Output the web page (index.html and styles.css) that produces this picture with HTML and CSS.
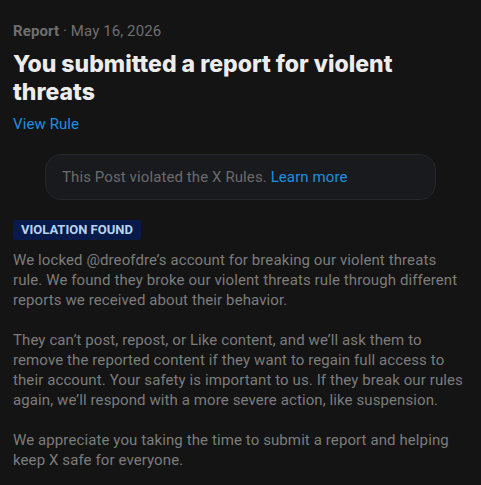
FILE: index.html
```html
<!DOCTYPE html>
<html>

<head>
	<title>Report</title>
	<link rel="stylesheet" href="styles.css">
</head>

<body>
	<div class="report">
		<div class="meta"><span class="meta-kind">Report</span> · May 16, 2026</div>
		<h1 class="title">You submitted a report for violent threats</h1>
		<a class="link rule-link" href="#">View Rule</a>

		<div class="notice">This Post violated the X Rules. <a class="link" href="#">Learn more</a></div>

		<span class="badge">VIOLATION FOUND</span>

		<div class="body">
			<p>We locked @dreofdre’s account for breaking our violent threats rule. We found they broke our violent threats rule through different reports we received about their behavior.</p>
			<p>They can’t post, repost, or Like content, and we’ll ask them to remove the reported content if they want to regain full access to their account. Your safety is important to us. If they break our rules again, we’ll respond with a more severe action, like suspension.</p>
			<p>We appreciate you taking the time to submit a report and helping keep X safe for everyone.</p>
		</div>
	</div>
</body>

</html>
```

FILE: styles.css
```css
body {
	margin: 0;
	background: #141414;
	font-family: Roboto, "Liberation Sans", sans-serif;
	color: #7c7c7c;
	letter-spacing: 0.1px;
}

.report {
	padding: 20px 13px 0 13px;
}

.meta {
	font-size: 15px;
	line-height: 22px;
	color: #6f6f6f;
}

.meta-kind {
	font-weight: bold;
}

.title {
	margin: 8px 0 0;
	font-family: Inter, Roboto, sans-serif;
	font-size: 23px;
	line-height: 28px;
	font-weight: 800;
	letter-spacing: 0;
	color: #ececec;
}

.link {
	color: #1d8fe0;
	text-decoration: none;
}

.rule-link {
	display: block;
	margin-top: 8px;
	font-size: 15px;
	line-height: 20px;
}

.notice {
	margin: 20px 32px 0;
	padding: 12px 16px;
	border: 1px solid #25272b;
	border-radius: 16px;
	background: #191a1d;
	font-size: 15px;
	line-height: 20px;
	color: #6a6b6e;
}

.badge {
	display: inline-block;
	margin-top: 20px;
	padding: 0 8px;
	border-radius: 3px;
	background: #071a4a;
	color: #b8d4ee;
	font-size: 13px;
	line-height: 20px;
	font-weight: bold;
	letter-spacing: 0;
}

.body {
	margin-top: 10px;
	font-size: 15px;
	line-height: 20px;
}

.body p {
	margin: 0 0 20px;
}
```
